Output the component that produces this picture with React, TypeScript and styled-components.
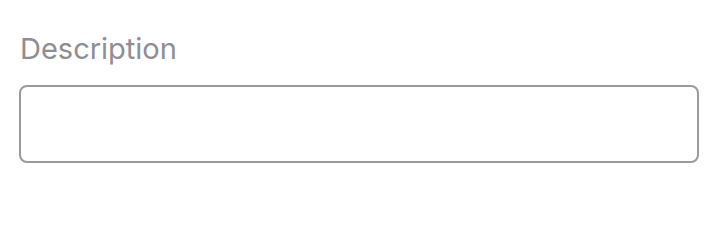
import styled, { createGlobalStyle } from 'styled-components';

const GlobalStyle = createGlobalStyle`
  html, body {
    margin: 0;
    padding: 0;
    background: #ffffff;
  }
  body {
    font-family: Inter, "Noto Sans", sans-serif;
  }
`;

const Field = styled.div`
  display: flex;
  flex-direction: column;
  padding: 31px 21px 0 19px;
  width: 720px;
  box-sizing: border-box;
`;

const Label = styled.label`
  font-size: 29px;
  line-height: 36px;
  color: #8e8e93;
  font-weight: 400;
  padding-left: 1px;
  margin-bottom: 18px;
`;

const Input = styled.textarea`
  display: block;
  box-sizing: border-box;
  width: 680px;
  height: 78px;
  margin: 0;
  border: 2px solid #9a9a9e;
  border-radius: 8px;
  background: #fff;
  resize: none;
  outline: none;
  font-family: inherit;
  font-size: 20px;
  padding: 10px 14px;
`;

export default function App() {
  return (
    <>
      <GlobalStyle />
      <Field>
        <Label>Description</Label>
        <Input />
      </Field>
    </>
  );
}
